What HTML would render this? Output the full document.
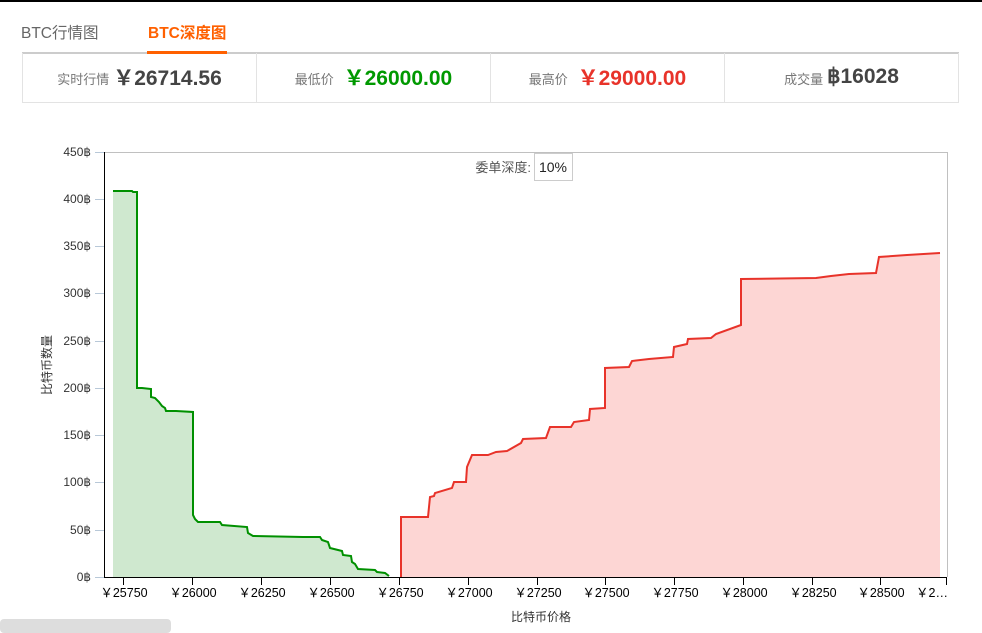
<!DOCTYPE html>
<html><head><meta charset="utf-8"><style>
*{margin:0;padding:0;box-sizing:border-box}
body{width:982px;height:631px;background:#fff;position:relative;overflow:hidden;font-family:"Liberation Sans","Noto Sans CJK SC",sans-serif}
.top{position:absolute;left:0;top:0;width:982px;height:2px;background:#000}
.tab{position:absolute;top:24px;font-size:15.5px;line-height:20px}
.t1{left:21px;color:#666}
.t2{left:148px;color:#ff6000;font-weight:bold}
.ul{position:absolute;left:147px;top:51px;width:80px;height:3px;background:#ff6000}
.gl{position:absolute;left:22px;top:52px;width:937px;height:2px;background:#ccc}
.box{position:absolute;left:22px;top:53px;width:937px;height:50px;border:1px solid #e3e3e3;border-top:none;display:flex}
.cell{flex:1;border-right:1px solid #e3e3e3;display:flex;align-items:center;justify-content:center;padding-bottom:2px}
.cell:last-child{border-right:none}
.lb{font-size:13px;color:#777;margin-right:4px;margin-top:4px}
.v{font-size:21px;font-weight:bold;color:#444}
.g{color:#009900}.r{color:#e8332a}
.bar{position:absolute;left:0;top:619px;width:171px;height:14px;background:#ddd;border-radius:4px}
</style></head><body>
<div class="top"></div>
<div class="tab t1">BTC行情图</div>
<div class="tab t2">BTC深度图</div>
<div class="gl"></div>
<div class="ul"></div>
<div class="box">
<div class="cell"><span class="lb">实时行情</span><span class="v">￥26714.56</span></div>
<div class="cell"><span class="lb">最低价</span><span class="v g">&nbsp;￥26000.00</span></div>
<div class="cell"><span class="lb">最高价</span><span class="v r">&nbsp;￥29000.00</span></div>
<div class="cell"><span class="lb">成交量</span><span class="v">฿16028</span></div>
</div>
<svg width="982" height="631" style="position:absolute;left:0;top:0" font-family="Liberation Sans, Noto Sans CJK SC, sans-serif">
<line x1="104" y1="152.5" x2="947" y2="152.5" stroke="#c0c0c0"/>
<line x1="947.5" y1="152" x2="947.5" y2="577" stroke="#c0c0c0"/>
<path d="M113,577 L113,191 L132,191 L133,192 L137,192 L137,388 L142,388 L151,389 L151,397 L155,398 L159,402 L162,406 L165,408 L166,411 L176,411 L193,412 L193,515 L195,519 L198,522 L220,522 L222,525 L247,527 L248,533 L253,536 L303,537 L320,537 L322,540 L328,542 L330,548 L342,551 L343,555 L351,556 L352,562 L355,564 L358,569 L375,570 L377,572 L385,573 L389,576 L389,577 Z" fill="#cfe8cf"/>
<path d="M113,191 L132,191 L133,192 L137,192 L137,388 L142,388 L151,389 L151,397 L155,398 L159,402 L162,406 L165,408 L166,411 L176,411 L193,412 L193,515 L195,519 L198,522 L220,522 L222,525 L247,527 L248,533 L253,536 L303,537 L320,537 L322,540 L328,542 L330,548 L342,551 L343,555 L351,556 L352,562 L355,564 L358,569 L375,570 L377,572 L385,573 L389,576" fill="none" stroke="#009000" stroke-width="2"/>
<path d="M401,577 L401,517 L428,517 L430,497 L434,496 L435,493 L452,488 L454,482 L466,482 L467,467 L472,455 L488,455 L496,452 L507,451 L521,443 L523,439 L546,438 L550,427 L571,427 L574,422 L589,420 L590,409 L605,408 L605,368 L629,367 L632,361 L649,359 L673,357 L674,347 L687,344 L688,339 L711,338 L716,334 L741,325 L741,279 L816,278 L831,276 L849,274 L876,273 L879,257 L907,255 L940,253 L940,577 Z" fill="#fdd6d4"/>
<path d="M401,577 L401,517 L428,517 L430,497 L434,496 L435,493 L452,488 L454,482 L466,482 L467,467 L472,455 L488,455 L496,452 L507,451 L521,443 L523,439 L546,438 L550,427 L571,427 L574,422 L589,420 L590,409 L605,408 L605,368 L629,367 L632,361 L649,359 L673,357 L674,347 L687,344 L688,339 L711,338 L716,334 L741,325 L741,279 L816,278 L831,276 L849,274 L876,273 L879,257 L907,255 L940,253" fill="none" stroke="#e8332a" stroke-width="2"/>
<line x1="104.5" y1="152" x2="104.5" y2="578" stroke="#000"/>
<line x1="104" y1="577.5" x2="947" y2="577.5" stroke="#000"/>
<g stroke="#b8c8d8">
<line x1="95" y1="152.5" x2="104" y2="152.5"/><line x1="95" y1="199.5" x2="104" y2="199.5"/><line x1="95" y1="246.5" x2="104" y2="246.5"/><line x1="95" y1="293.5" x2="104" y2="293.5"/><line x1="95" y1="341.5" x2="104" y2="341.5"/><line x1="95" y1="388.5" x2="104" y2="388.5"/><line x1="95" y1="435.5" x2="104" y2="435.5"/><line x1="95" y1="482.5" x2="104" y2="482.5"/><line x1="95" y1="530.5" x2="104" y2="530.5"/><line x1="95" y1="577.5" x2="104" y2="577.5"/>
</g>
<g font-size="12" fill="#333" text-anchor="end">
<text x="91" y="156">450฿</text><text x="91" y="203">400฿</text><text x="91" y="250">350฿</text><text x="91" y="297">300฿</text><text x="91" y="345">250฿</text><text x="91" y="392">200฿</text><text x="91" y="439">150฿</text><text x="91" y="486">100฿</text><text x="91" y="534">50฿</text><text x="91" y="581">0฿</text>
</g>
<g stroke="#000">
<line x1="123.5" y1="577" x2="123.5" y2="585"/><line x1="192.5" y1="577" x2="192.5" y2="585"/><line x1="261.5" y1="577" x2="261.5" y2="585"/><line x1="330.5" y1="577" x2="330.5" y2="585"/><line x1="399.5" y1="577" x2="399.5" y2="585"/><line x1="468.5" y1="577" x2="468.5" y2="585"/><line x1="537.5" y1="577" x2="537.5" y2="585"/><line x1="605.5" y1="577" x2="605.5" y2="585"/><line x1="674.5" y1="577" x2="674.5" y2="585"/><line x1="743.5" y1="577" x2="743.5" y2="585"/><line x1="812.5" y1="577" x2="812.5" y2="585"/><line x1="880.5" y1="577" x2="880.5" y2="585"/><line x1="946.5" y1="577" x2="946.5" y2="585"/>
</g>
<g font-size="12.5" fill="#000" text-anchor="middle">
<text x="124" y="597">￥25750</text><text x="193" y="597">￥26000</text><text x="262" y="597">￥26250</text><text x="331" y="597">￥26500</text><text x="400" y="597">￥26750</text><text x="469" y="597">￥27000</text><text x="538" y="597">￥27250</text><text x="606" y="597">￥27500</text><text x="675" y="597">￥27750</text><text x="744" y="597">￥28000</text><text x="813" y="597">￥28250</text><text x="881" y="597">￥28500</text><text x="932" y="597">￥2…</text>
</g>
<text x="541" y="621" font-size="12" fill="#333" text-anchor="middle">比特币价格</text>
<text transform="translate(51,365) rotate(-90)" font-size="12" fill="#333" text-anchor="middle">比特币数量</text>
<text x="531" y="172" font-size="13" fill="#555" text-anchor="end">委单深度:</text>
<rect x="534.5" y="153.5" width="38" height="27" fill="#fff" stroke="#ccc"/>
<text x="553" y="172" font-size="14" fill="#222" text-anchor="middle">10%</text>
</svg>
<div class="bar"></div>
</body></html>
